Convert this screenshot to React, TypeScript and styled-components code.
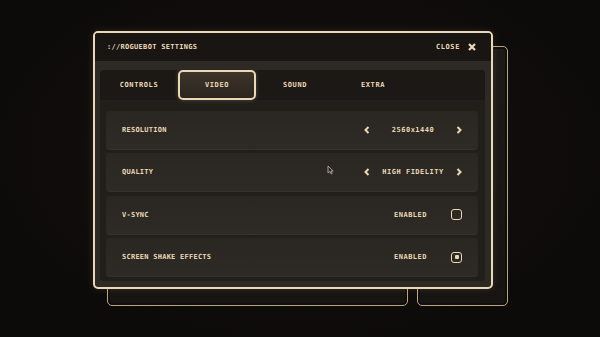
import styled, { createGlobalStyle } from 'styled-components';
import { useState } from 'react';

const GlobalStyle = createGlobalStyle`
  html, body {
    margin: 0;
    padding: 0;
    background: #0f0d0b;
  }
  * { box-sizing: border-box; }
`;

const cream = '#ead8b6';

const Stage = styled.div`
  position: relative;
  width: 600px;
  height: 337px;
  overflow: hidden;
  padding: 31px 0 0 93px;
  background: radial-gradient(ellipse at 50% 45%, #15120f 0%, #0d0b09 75%);
  font-family: "DejaVu Sans Mono", "Liberation Mono", monospace;
  font-weight: bold;
  color: ${cream};
`;

const BackPanel = styled.div<{ $left: number; $top: number; $width: number; $height: number }>`
  position: absolute;
  left: ${p => p.$left}px;
  top: ${p => p.$top}px;
  width: ${p => p.$width}px;
  height: ${p => p.$height}px;
  border: 1.5px solid #b8a483;
  border-radius: 5px;
  background: linear-gradient(180deg, #1e1a16, #171411);
  box-shadow: inset 0 0 0 2px #110f0d;
`;

const Window = styled.div`
  position: relative;
  width: 400px;
  height: 258px;
  border: 2px solid ${cream};
  border-radius: 5px;
  background: #2d2924;
  box-shadow: 0 0 8px rgba(234, 216, 182, 0.12);
  display: flex;
  flex-direction: column;
  overflow: hidden;
`;

const Header = styled.div`
  height: 28px;
  flex: none;
  background: #181512;
  display: flex;
  align-items: center;
  justify-content: space-between;
  padding: 0 15px 0 12px;
  font-size: 7px;
  letter-spacing: 0.3px;
`;

const CloseButton = styled.div`
  display: flex;
  align-items: center;
  gap: 8px;
  letter-spacing: 0.6px;
`;

const Body = styled.div`
  flex: 1;
  padding: 9px 6px 6px 5px;
  display: flex;
`;

const Panel = styled.div`
  flex: 1;
  border-radius: 4px;
  background: #221f1b;
  display: flex;
  flex-direction: column;
  overflow: hidden;
`;

const TabBar = styled.div`
  height: 30px;
  flex: none;
  display: flex;
  background: #1b1815;
`;

const Tab = styled.div<{ $active?: boolean }>`
  width: 78px;
  display: flex;
  align-items: center;
  justify-content: center;
  font-size: 7px;
  letter-spacing: 0.6px;
  border-radius: 5px;
  border: 2px solid ${p => (p.$active ? cream : 'transparent')};
  background: ${p => (p.$active ? 'linear-gradient(180deg, #3e3529 0%, #2b251e 100%)' : 'transparent')};
  box-shadow: ${p => (p.$active ? '0 0 4px rgba(234, 216, 182, 0.25)' : 'none')};
`;

const Rows = styled.div`
  flex: 1;
  display: flex;
  flex-direction: column;
  gap: 2.5px;
  padding: 9.5px 7px 4px 6px;
`;

const Row = styled.div`
  height: 40px;
  flex: none;
  border-radius: 4px;
  background: linear-gradient(180deg, #2a2622 0%, #2e2a25 100%);
  box-shadow: inset 0 -1px 0 rgba(255, 240, 210, 0.04), inset 0 1px 0 rgba(0, 0, 0, 0.15);
  display: flex;
  align-items: center;
  justify-content: space-between;
  padding: 0 16px;
`;

const Label = styled.span`
  font-size: 7px;
  letter-spacing: 0.25px;
`;

const Selector = styled.div`
  width: 100px;
  margin-right: -1px;
  display: grid;
  grid-template-columns: 8px 1fr 8px;
  align-items: center;
  justify-items: center;
`;

const Value = styled.span`
  font-size: 7px;
  letter-spacing: 0.5px;
  white-space: nowrap;
`;

const Toggle = styled.div`
  display: flex;
  align-items: center;
  gap: 24px;
`;

const Checkbox = styled.div<{ $checked?: boolean }>`
  width: 11px;
  height: 11px;
  border: 1.5px solid ${cream};
  border-radius: 3px;
  display: flex;
  align-items: center;
  justify-content: center;
  &::after {
    content: '';
    width: 4px;
    height: 4px;
    border-radius: 1px;
    background: ${p => (p.$checked ? cream : 'transparent')};
  }
`;

const Cursor = styled.svg`
  position: absolute;
  left: 327px;
  top: 165px;
`;

const Chevron = ({ dir }: { dir: 'left' | 'right' }) => (
  <svg width="6" height="8" viewBox="0 0 6 8">
    <polyline
      points={dir === 'left' ? '4.5,1 1.5,4 4.5,7' : '1.5,1 4.5,4 1.5,7'}
      fill="none"
      stroke={cream}
      strokeWidth="2"
    />
  </svg>
);

const tabs = ['CONTROLS', 'VIDEO', 'SOUND', 'EXTRA'];

function App() {
  const [tab, setTab] = useState('VIDEO');
  const [vsync, setVsync] = useState(false);
  const [shake, setShake] = useState(true);

  return (
    <Stage>
      <GlobalStyle />
      <BackPanel $left={107} $top={70} $width={301} $height={236} />
      <BackPanel $left={417} $top={46} $width={91} $height={260} />
      <Window>
        <Header>
          <span>://ROGUEBOT SETTINGS</span>
          <CloseButton>
            CLOSE
            <svg width="8" height="8" viewBox="0 0 8 8">
              <path d="M1 1 L7 7 M7 1 L1 7" stroke={cream} strokeWidth="2.2" />
            </svg>
          </CloseButton>
        </Header>
        <Body>
          <Panel>
            <TabBar>
              {tabs.map(t => (
                <Tab key={t} $active={t === tab} onClick={() => setTab(t)}>
                  {t}
                </Tab>
              ))}
            </TabBar>
            <Rows>
              <Row>
                <Label>RESOLUTION</Label>
                <Selector>
                  <Chevron dir="left" />
                  <Value>2560x1440</Value>
                  <Chevron dir="right" />
                </Selector>
              </Row>
              <Row>
                <Label>QUALITY</Label>
                <Selector>
                  <Chevron dir="left" />
                  <Value>HIGH FIDELITY</Value>
                  <Chevron dir="right" />
                </Selector>
              </Row>
              <Row>
                <Label>V-SYNC</Label>
                <Toggle onClick={() => setVsync(v => !v)}>
                  <Value>ENABLED</Value>
                  <Checkbox $checked={vsync} />
                </Toggle>
              </Row>
              <Row>
                <Label>SCREEN SHAKE EFFECTS</Label>
                <Toggle onClick={() => setShake(v => !v)}>
                  <Value>ENABLED</Value>
                  <Checkbox $checked={shake} />
                </Toggle>
              </Row>
            </Rows>
          </Panel>
        </Body>
      </Window>
      <Cursor width="7" height="10" viewBox="0 0 7 10">
        <path d="M1 1 L1 8 L2.8 6.4 L4.2 9 L5.2 8.5 L4 6 L6.2 6 Z" fill="#2a2622" stroke="#b8ab96" strokeWidth="0.9" />
      </Cursor>
    </Stage>
  );
}

export default App;
